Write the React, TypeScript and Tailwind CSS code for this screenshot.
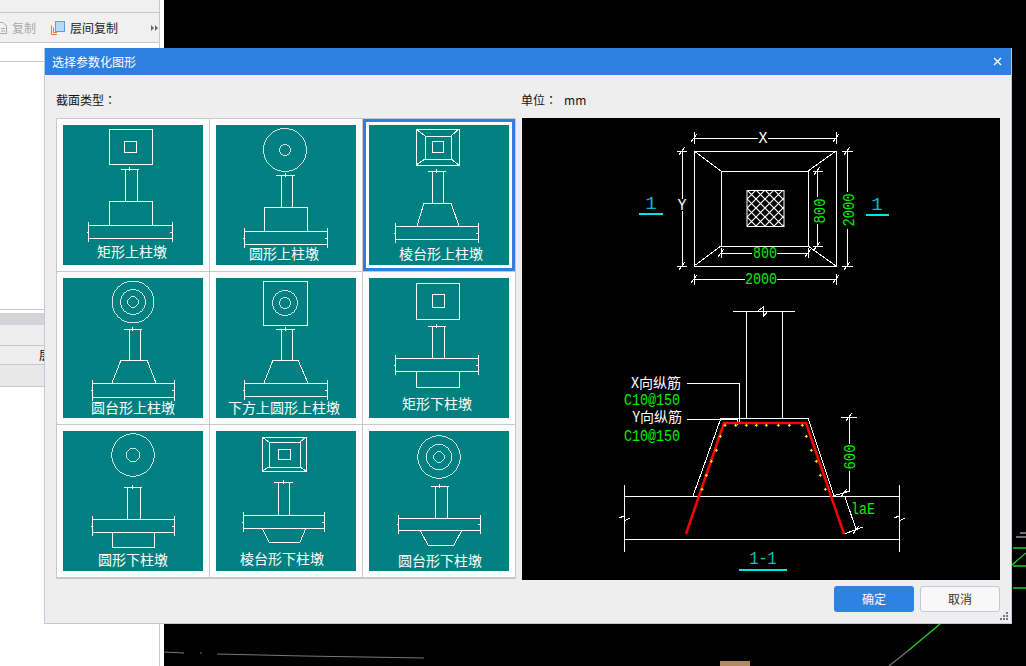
const cjk = "font-['Noto_Sans_CJK_SC','Liberation_Sans',sans-serif]";

// helpers that return path data for the small thumbnails
const rect = (x1: number, y1: number, x2: number, y2: number) => `M${x1} ${y1}H${x2}V${y2}H${x1}Z `;
const post = (a: number, b: number, c1: number, c2: number, top: number, bottom: number) => {
  const m = Math.round((c1 + c2) / 2);
  return `M${c1} ${top}H${c2} M${a} ${top}V${bottom} M${b} ${top}V${bottom} M${m - 1} ${top - 2}V${top + 2} `;
};
const slab = (x1: number, x2: number, y1: number, y2: number) => {
  const m = Math.round((y1 + y2) / 2);
  return `M${x1} ${y1}H${x2} M${x1} ${y2}H${x2} M${x1} ${y1 - 3}V${y2 + 4} M${x2} ${y1 - 3}V${y2 + 4} M${x1 - 1} ${m}h2 M${x2 - 2} ${m}h3 `;
};
const corners = (o: number[], m: number[]) =>
  `M${o[0]} ${o[1]}L${m[0]} ${m[1]} M${o[2]} ${o[1]}L${m[2]} ${m[1]} M${o[0]} ${o[3]}L${m[0]} ${m[3]} M${o[2]} ${o[3]}L${m[2]} ${m[3]} `;

type ThumbData = { d: string; circles?: number[][]; label: string; lx: number; ly: number };

const thumbs: ThumbData[] = [
  {
    d: rect(46, 4, 89, 39) + rect(61, 16, 73, 27) + post(62, 74, 58, 76, 44, 76) + rect(46, 76, 89, 100) + slab(25, 109, 100, 113),
    label: "矩形上柱墩", lx: 69, ly: 132,
  },
  {
    d: post(65, 76, 60, 79, 50, 82) + rect(48, 82, 91, 106) + slab(28, 111, 106, 119),
    circles: [[69, 25, 21.5], [69, 25, 5.5]],
    label: "圆形上柱墩", lx: 68, ly: 134,
  },
  {
    d: rect(47, 4, 90, 40) + rect(56, 11, 82, 34) + rect(63, 16, 74, 27) + corners([47, 4, 90, 40], [56, 11, 82, 34]) +
      post(63, 74, 59, 77, 46, 78) + "M55 78H82 M55 78L48 101 M82 78L90 101 " + slab(26, 109, 101, 114),
    label: "棱台形上柱墩", lx: 72, ly: 134,
  },
  {
    d: post(66, 77, 61, 79, 51, 82) + "M58 82H84 M58 82L49 105 M84 82L93 105 " + slab(29, 111, 105, 119),
    circles: [[70, 24, 21], [70, 24, 12.5], [70, 24, 5.3]],
    label: "圆台形上柱墩", lx: 70, ly: 135,
  },
  {
    d: rect(47, 3, 91, 47) + post(65, 76, 60, 79, 51, 82) + "M57 82H82 M57 82L48 105 M82 82L92 105 " + slab(28, 111, 105, 118),
    circles: [[69, 25, 12.5], [69, 25, 5.5]],
    label: "下方上圆形上柱墩", lx: 68, ly: 135,
  },
  {
    d: rect(47, 5, 90, 41) + rect(63, 16, 75, 29) + post(63, 75, 59, 77, 48, 80) + slab(26, 109, 80, 93) + "M47 93V109H90V93 ",
    label: "矩形下柱墩", lx: 68, ly: 131,
  },
  {
    d: post(64, 77, 61, 79, 56, 88) + slab(29, 111, 88, 101) + "M49 101V116H91V101 ",
    circles: [[70, 24, 21.3], [70, 24, 6.7]],
    label: "圆形下柱墩", lx: 70, ly: 134,
  },
  {
    d: rect(46, 6, 90, 40) + rect(53, 11, 84, 36) + rect(62, 18, 74, 28) + corners([46, 6, 90, 40], [53, 11, 84, 36]) +
      post(62, 73, 58, 77, 51, 84) + slab(27, 108, 84, 97) + "M46 97L53 111H84L90 97 ",
    label: "棱台形下柱墩", lx: 66, ly: 133,
  },
  {
    d: post(66, 78, 62, 80, 55, 87) + slab(29, 111, 87, 99) + "M51 99L59 114H85L93 99 ",
    circles: [[70, 26, 21.3], [70, 26, 12.7], [70, 26, 5.3]],
    label: "圆台形下柱墩", lx: 71, ly: 135,
  },
];

function Thumb({ item }: { item: ThumbData }) {
  return (
    <svg width="140" height="140" viewBox="0 0 140 140" className="block bg-[#008080]">
      <path d={item.d} fill="none" stroke="#fff" strokeWidth="1" shapeRendering="crispEdges" />
      {item.circles?.map((c, i) => (
        <circle key={i} cx={c[0]} cy={c[1]} r={c[2]} fill="none" stroke="#fff" strokeWidth="0.8" shapeRendering="crispEdges" />
      ))}
      <text x={item.lx} y={item.ly} textAnchor="middle" fontSize="14" fill="#fff">{item.label}</text>
    </svg>
  );
}

const topBars = [345, 377, 409, 439, 469, 505, 538, 577];
const sideBars = [
  [331, 409], [319, 451], [304, 484], [289, 526], [276, 568],
  [589, 409], [604, 451], [619, 484], [631, 526], [646, 568],
];
const rebarDots = [...topBars.map((x) => [x, 376]), ...sideBars].map(([x, y]) => [88 + x / 3, 182 + y / 3]);

const slash = (x: number, y: number) => `M${x - 3} ${y + 4}L${x + 3} ${y - 4} `;

const whiteLines =
  // plan
  rect(172, 33, 314, 148) + rect(199, 53, 286, 128) + corners([172, 33, 314, 148], [199, 53, 286, 128]) +
  "M172 20H236 M246 20H314 M172 14V26 M314 14V26 " + slash(172, 20) + slash(314, 20) +
  "M160 33V81 M160 93V148 M155 33H165 M155 148H165 " + slash(160, 33) + slash(160, 148) +
  "M325 33V74 M325 111V148 M320 33H331 M320 148H331 " + slash(325, 33) + slash(325, 148) +
  "M295 53V79 M295 106V128 M291 53H301 M291 128H301 " + slash(295, 53) + slash(295, 128) +
  "M199 135H230 M255 135H286 M199 130V140 M286 130V140 " + slash(199, 135) + slash(286, 135) +
  "M172 161H223 M255 161H314 M172 156V167 M314 156V167 " + slash(172, 161) + slash(314, 161) +
  // section
  "M211 193H273 M224 193V300 M260 193V300 M236 193L241 189V199L246 193 " +
  "M199 300H286 M199 300L171 378 M286 300L312 378 " +
  "M102 378H377 M102 421H377 M102 367V434 M377 367V434 " +
  "M97 400L102 398V403L108 400 M372 400L377 398V403L383 400 " +
  "M165 265H217V304 M165 301H215V307 " +
  "M319 299H335 M327 299V326 M327 353V374 " + slash(327, 299) +
  "M311 378L328 373 " + slash(322, 375) +
  "M323 379L334 411 M322 416L341 409 " + slash(334, 412);

const dimText = "'Liberation Mono',monospace";

function SectionDrawing() {
  return (
    <svg width="478" height="462" viewBox="0 0 478 462" className="block bg-black">
      <defs>
        <pattern id="hatch" width="9" height="9" patternUnits="userSpaceOnUse" patternTransform="translate(225 72)">
          <path d="M0 0L9 9 M9 0L0 9" stroke="#fff" strokeWidth="1.2" />
        </pattern>
      </defs>
      <rect x="225" y="72.5" width="37" height="36" fill="url(#hatch)" stroke="#fff" />
      <path d={whiteLines} fill="none" stroke="#fff" strokeWidth="1" shapeRendering="crispEdges" />
      <path d="M164 416L202 305H284L322 416" fill="none" stroke="#ff0000" strokeWidth="2.5" />
      {rebarDots.map(([x, y], i) => (
        <path key={i} d={`M${x - 1.5} ${y}h3 M${x} ${y - 1.5}v3`} stroke="#ffff00" strokeWidth="1" />
      ))}

      <g fontFamily={dimText} fontSize="16" fill="#00f000" textAnchor="middle" lengthAdjust="spacingAndGlyphs">
        <text x="239" y="166" textLength="32" lengthAdjust="spacingAndGlyphs">2000</text>
        <text x="243" y="140" textLength="24" lengthAdjust="spacingAndGlyphs">800</text>
        <text x="332" y="92" textLength="33" lengthAdjust="spacingAndGlyphs" transform="rotate(-90 332 92)">2000</text>
        <text x="303" y="93" textLength="25" lengthAdjust="spacingAndGlyphs" transform="rotate(-90 303 93)">800</text>
        <text x="333" y="339" textLength="25" lengthAdjust="spacingAndGlyphs" transform="rotate(-90 333 339)">600</text>
        <text x="341" y="396" textLength="24" lengthAdjust="spacingAndGlyphs">laE</text>
        <text x="130" y="287" textLength="56" lengthAdjust="spacingAndGlyphs">C10@150</text>
        <text x="130" y="323" textLength="56" lengthAdjust="spacingAndGlyphs">C10@150</text>
        <text x="241" y="25" fill="#fff" textLength="9" lengthAdjust="spacingAndGlyphs">X</text>
        <text x="160" y="92" fill="#fff" textLength="9" lengthAdjust="spacingAndGlyphs">Y</text>
      </g>

      <g fontFamily={dimText} fill="#0cb4d0" textAnchor="middle">
        <text x="129" y="91" fontSize="19">1</text>
        <text x="355" y="92" fontSize="19">1</text>
        <text x="241" y="446" fontSize="19" fill="#10c8b8" textLength="27" lengthAdjust="spacingAndGlyphs">1-1</text>
      </g>
      <path d="M117 96H141 M344 97H367 M217 452H265" stroke="#00e6e6" strokeWidth="2" shapeRendering="crispEdges" />

      <g fontSize="14" fill="#fff" textAnchor="end">
        <text x="159" y="270">X向纵筋</text>
        <text x="160" y="304">Y向纵筋</text>
      </g>
    </svg>
  );
}

function BackdropLines() {
  return (
    <svg width="862" height="666" viewBox="0 0 862 666" className="block">
      <path d="M849 548H862 M849 566H862 M849 588H862" stroke="#149a14" strokeWidth="2" fill="none" shapeRendering="crispEdges" />
      <path d="M848 565L862 553 M776 624L745 650" stroke="#22dd22" strokeWidth="1.2" fill="none" />
      <path d="M745 650L725 666" stroke="#777" strokeWidth="1.2" fill="none" />
      <path d="M0 652L20 653 M36 653h2 M53 654L140 656 M140 656L260 658" stroke="#777" fill="none" />
      <path d="M852 537h10 M856 533h6" stroke="#ddd" fill="none" />
      <path d="M556 661H586V666H556Z" fill="#b08a5a" />
    </svg>
  );
}

export default function App() {
  return (
    <div className={`relative flex h-[666px] w-[1026px] overflow-hidden bg-white text-xs ${cjk}`}>
      {/* app behind the dialog */}
      <aside className="flex w-[160px] shrink-0 flex-col border-r border-[#c8c8c8] bg-white">
        <div className="h-[13px] border-b border-[#c8c8c8] bg-[#f0f0f0]" />
        <div className="flex h-[30px] items-center border-b border-[#c8c8c8] bg-[#f0f0f0] text-[#222]">
          <svg width="7" height="14" viewBox="0 0 7 14" className="shrink-0">
            <path d="M-3 1.5H3L6.5 5V12.5H-3 M1 7.5H5 M1 10H5" fill="none" stroke="#aaa" />
          </svg>
          <span className="ml-[5px] w-[39px] text-[#aaa]">复制</span>
          <svg width="15" height="15" viewBox="0 0 15 15" className="shrink-0">
            <path d="M.5 5.5V14.5H6" fill="none" stroke="#e07b39" />
            <path d="M2.5 7.5V12.5H6" fill="none" stroke="#e07b39" />
            <rect x="4.5" y="1.5" width="9" height="10" fill="#b8d6fa" stroke="#5f9ae6" />
          </svg>
          <span className="ml-[4px]">层间复制</span>
          <svg width="8" height="6" viewBox="0 0 8 6" className="ml-[33px] shrink-0">
            <path d="M0 0L3 3L0 6Z M4 0L7 3L4 6Z" fill="#666" />
          </svg>
        </div>
        <div className="h-[19px] border-b border-[#c8c8c8]" />
        <div className="h-[248px] border-b border-[#c8c8c8]" />
        <div className="mt-[3px] h-[12px] bg-[#d4d4d8]" />
        <div className="h-[21px] border-b border-[#c8c8c8] bg-[#eeeeee]" />
        <div className="flex h-[19px] items-center justify-end border-b border-[#c8c8c8] bg-[#eeeeee] pr-[108px]">层</div>
        <div className="h-[22px] border-b border-[#c8c8c8] bg-[#e8e8e8]" />
      </aside>
      <div className="w-[4px] shrink-0 bg-white" />
      <main className="flex-1 bg-black">
        <BackdropLines />
      </main>

      {/* dialog */}
      <div className="absolute left-[44px] top-[48px] flex h-[576px] w-[968px] flex-col border-x border-b border-[#c0c8dc] bg-[#eeeeee]">
        <div className="flex h-[27px] shrink-0 items-center justify-between bg-[#2d7fe0] pl-[7px] pr-[9px] text-white">
          <span>选择参数化图形</span>
          <svg width="9" height="9" viewBox="0 0 9 9">
            <path d="M1 1L8 8 M8 1L1 8" stroke="#fff" strokeWidth="1.4" />
          </svg>
        </div>
        <div className="flex h-[43px] shrink-0 items-center pl-[11px] pt-[7px] font-['Noto_Sans_CJK_TC',sans-serif] text-[#111]">
          <span className="w-[465px]">截面类型：</span>
          <span>单位：</span>
          <span className="ml-[7px]">mm</span>
        </div>
        <div className="flex h-[462px] shrink-0 gap-[6px] pl-[11px]">
          <div className="grid h-[461px] w-[460px] grid-cols-[153px_153px_152px] grid-rows-[153px_153px_153px] border border-[#c8c8c8] bg-white">
            {thumbs.map((item, i) => (
              <div
                key={item.label}
                className={`relative border-b border-[#c8c8c8] p-[6px] ${i % 3 === 2 ? "" : "border-r"}`}
              >
                <Thumb item={item} />
                {i === 2 && <div className="absolute inset-0 border-[3px] border-[#2d7fe0]" />}
              </div>
            ))}
          </div>
          <SectionDrawing />
        </div>
        <div className="mt-[6px] flex justify-end gap-[6px] pr-[11px]">
          <button className="h-[26px] w-[80px] rounded-[3px] bg-[#2d82e4] text-white">确定</button>
          <button className="h-[26px] w-[80px] rounded-[3px] border border-[#c0c8dc] bg-[#f8f8f8] text-[#333]">取消</button>
        </div>
        <svg width="8" height="8" viewBox="0 0 8 8" className="absolute bottom-[3px] right-[3px]">
          <path d="M6 0h2v2H6Z M3 3h2v2H3Z M6 3h2v2H6Z M0 6h2v2H0Z M3 6h2v2H3Z M6 6h2v2H6Z" fill="#777" />
        </svg>
      </div>
    </div>
  );
}
